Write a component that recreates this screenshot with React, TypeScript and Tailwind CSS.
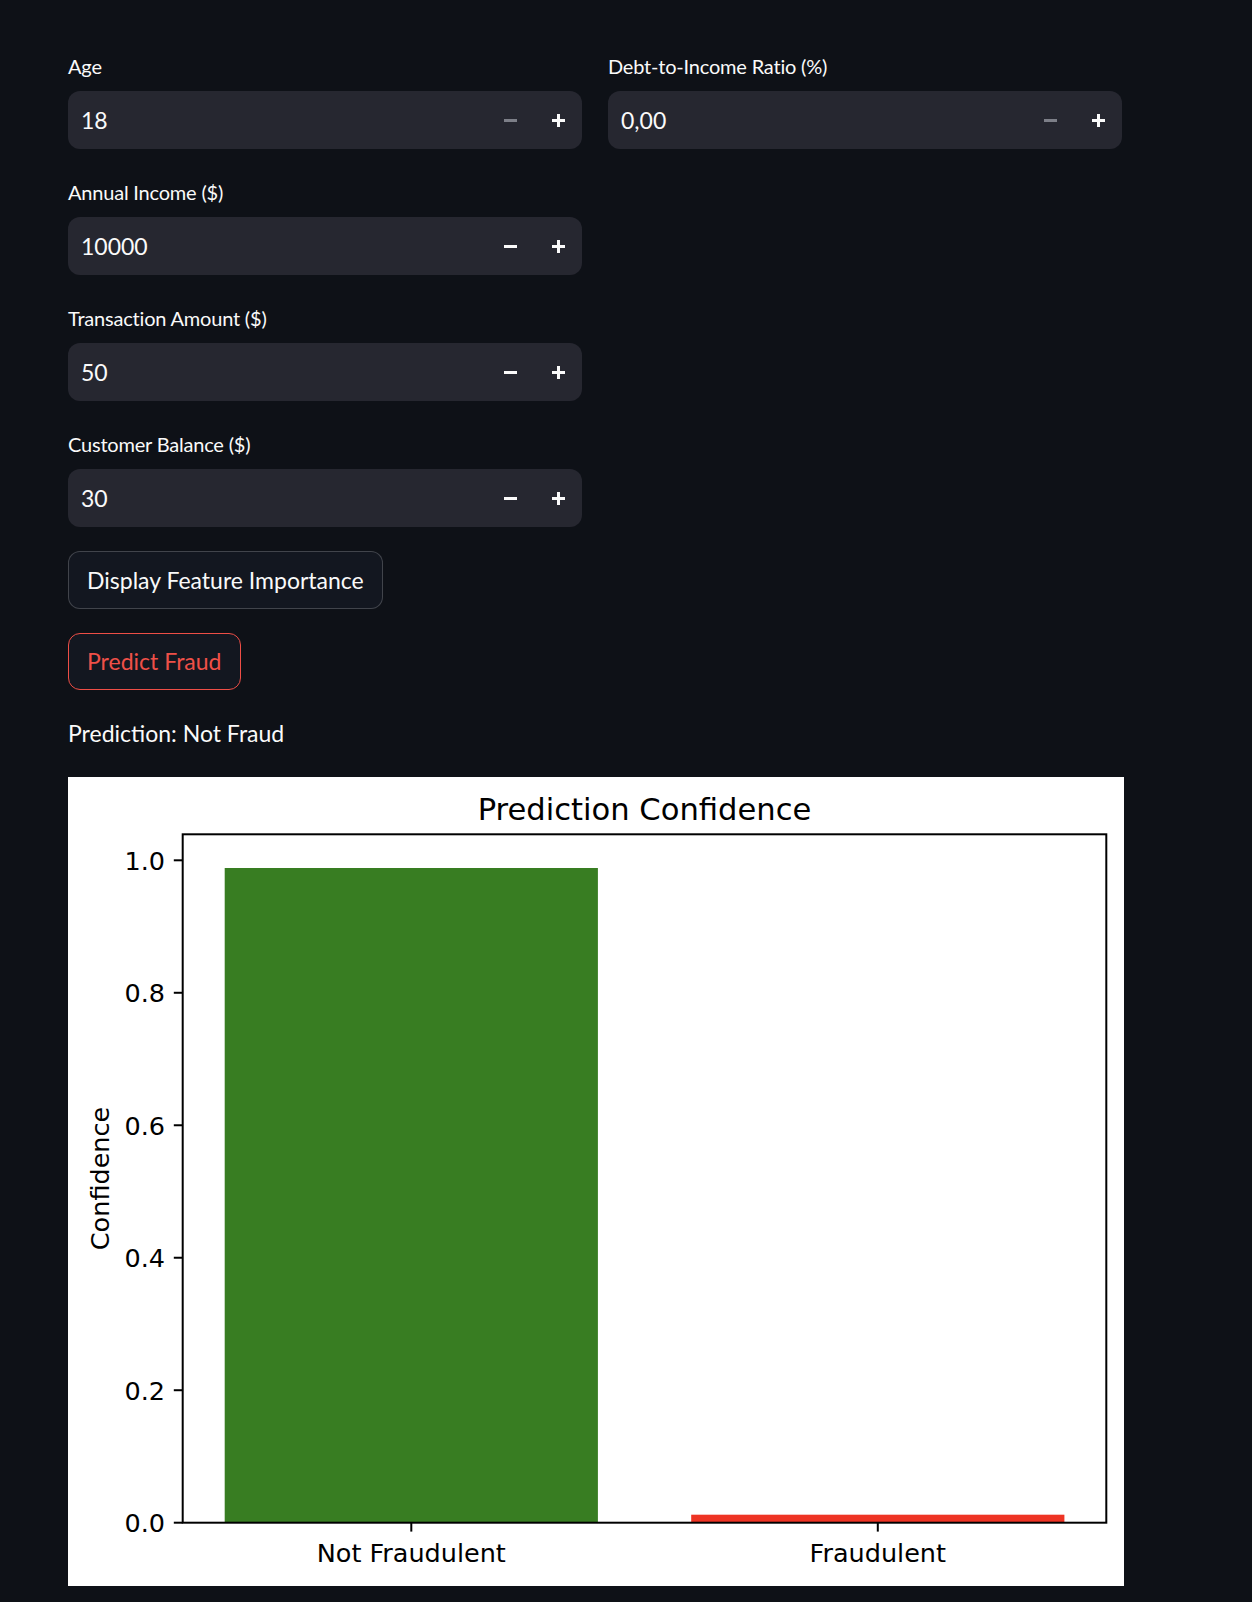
import React from 'react';

const font = { fontFamily: '"Source Sans Pro", Lato, "Noto Sans", sans-serif' };

function StepIcon({ kind, disabled }: { kind: 'minus' | 'plus'; disabled?: boolean }) {
  const color = disabled ? '#7d7f88' : '#fafafa';
  return (
    <svg width="13" height="13" viewBox="0 0 13 13">
      <rect x="0" y="5" width="13" height="3" fill={color} />
      {kind === 'plus' && <rect x="5" y="0" width="3" height="13" fill={color} />}
    </svg>
  );
}

function NumberInput({ label, value, minDisabled }: { label: string; value: string; minDisabled?: boolean }) {
  return (
    <div className="flex flex-col">
      <div className="h-[44px] pt-[3px] text-[20px] leading-[33px] tracking-[-0.01em] text-[#fafafa]">{label}</div>
      <div className="flex h-[58px] items-center rounded-[12px] bg-[#262730]">
        <div className="flex-1 pl-[13px] text-[23px] text-[#fafafa]">{value}</div>
        <button className="flex h-full w-[48px] items-center justify-center">
          <StepIcon kind="minus" disabled={minDisabled} />
        </button>
        <button className="flex h-full w-[48px] items-center justify-center">
          <StepIcon kind="plus" />
        </button>
      </div>
    </div>
  );
}

function ConfidenceChart() {
  const dv = '"DejaVu Sans", "Liberation Sans", sans-serif';
  const y0 = 745.7;
  const k = 662.4;
  const ticks = [0, 0.2, 0.4, 0.6, 0.8, 1.0];
  return (
    <svg width="1056" height="809" viewBox="0 0 1056 809" className="block bg-white">
      <text x="576.5" y="43.3" fontSize="30.6" fontFamily={dv} textAnchor="middle" fill="#000">
        Prediction Confidence
      </text>
      <rect x="156.7" y="91" width="373.2" height={y0 - 91} fill="#387d22" />
      <rect x="623.2" y={y0 - 8} width="373.2" height="8" fill="#ee3424" />
      <rect x="114.7" y="57.3" width="923.6" height={y0 - 57.3} fill="none" stroke="#000" strokeWidth="2" />
      {ticks.map((t) => {
        const y = y0 - k * t;
        return (
          <g key={t}>
            <line x1="105.8" x2="114.7" y1={y} y2={y} stroke="#000" strokeWidth="2" />
            <text x="97" y={y + 9.3} fontSize="25.5" fontFamily={dv} textAnchor="end" fill="#000">
              {t.toFixed(1)}
            </text>
          </g>
        );
      })}
      {[
        { x: 343.3, label: 'Not Fraudulent' },
        { x: 809.8, label: 'Fraudulent' },
      ].map((c) => (
        <g key={c.label}>
          <line x1={c.x} x2={c.x} y1={y0} y2={y0 + 8.9} stroke="#000" strokeWidth="2" />
          <text x={c.x} y="784.7" fontSize="25.5" fontFamily={dv} textAnchor="middle" fill="#000">
            {c.label}
          </text>
        </g>
      ))}
      <text
        x="41"
        y="401.5"
        fontSize="25.5"
        fontFamily={dv}
        textAnchor="middle"
        fill="#000"
        transform="rotate(-90 41 401.5)"
      >
        Confidence
      </text>
    </svg>
  );
}

export default function App() {
  return (
    <div className="min-h-screen bg-[#0e1117] pt-[47px] pb-[17px]" style={font}>
      <div className="ml-[68px] flex w-[1056px] flex-col gap-[24px]">
        <div className="grid grid-cols-[514px_514px] gap-x-[26px]">
          <div className="flex flex-col gap-[24px]">
            <NumberInput label="Age" value="18" minDisabled />
            <NumberInput label="Annual Income ($)" value="10000" />
            <NumberInput label="Transaction Amount ($)" value="50" />
            <NumberInput label="Customer Balance ($)" value="30" />
          </div>
          <div className="flex flex-col gap-[24px]">
            <NumberInput label="Debt-to-Income Ratio (%)" value="0,00" minDisabled />
          </div>
        </div>
        <div>
          <button className="h-[57.6px] rounded-[12px] border-[1.5px] border-[#fafafa33] bg-[#131720] px-[18px] text-[23px] text-[#fafafa]">
            Display Feature Importance
          </button>
        </div>
        <div>
          <button className="h-[57.6px] rounded-[12px] border-[1.5px] border-[#ee4e46] bg-[#131720] px-[18px] text-[23px] text-[#ef5048]">
            Predict Fraud
          </button>
        </div>
        <p className="text-[23px] leading-[38.4px] text-[#fafafa]">Prediction: Not Fraud</p>
        <ConfidenceChart />
      </div>
    </div>
  );
}
